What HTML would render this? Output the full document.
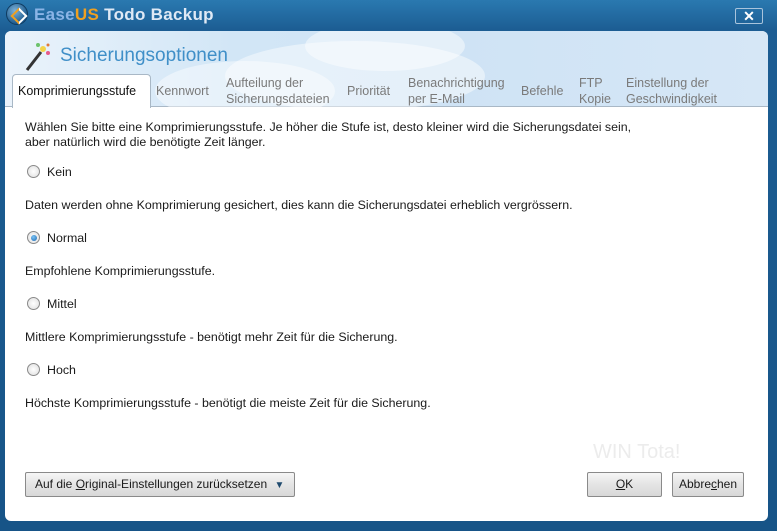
<!DOCTYPE html>
<html><head><meta charset="utf-8"><style>
*{margin:0;padding:0;box-sizing:border-box}
body{width:777px;height:531px;overflow:hidden;background:#1d5a8c;font-family:"Liberation Sans",sans-serif;font-size:12.4px;color:#1a1a1a;position:relative}
.frame{position:absolute;left:0;top:0;width:777px;height:531px;background:linear-gradient(#2a79b0,#1c5d93 30px,#175487);}
.title{position:absolute;left:34px;top:5px;font-family:"Liberation Sans",sans-serif;font-weight:bold;font-size:17px;color:#dfe9f5;letter-spacing:0.3px}
.title b{color:#f0a020}
.logo{position:absolute;left:6px;top:3px;width:22px;height:22px;border-radius:50%;background:radial-gradient(circle at 40% 35%,#7fb3d9,#1f5c8f 70%);border:1px solid #0f3b60}
.logo:after{content:"";position:absolute;left:6px;top:6px;width:8px;height:8px;border:2px solid #f0a020;border-right-color:#fff;border-bottom-color:#fff;transform:rotate(-45deg)}
.close{position:absolute;left:735px;top:8px;width:28px;height:16px;border:1px solid #a9c4dc;border-radius:2px;color:#fff;font-weight:bold;font-size:14px;text-align:center;line-height:14px}
.panel{position:absolute;left:5px;top:31px;width:763px;height:490px;background:#fff;border-radius:6px;overflow:hidden}
.head{position:absolute;left:0;top:0;width:100%;height:76px;background:linear-gradient(90deg,#eaf3fb 0%,#d2e6f6 30%,#cfe3f5 60%,#d6e7f6 100%);border-bottom:1px solid #a9b8c6}
.cloud{position:absolute;border-radius:50%;background:rgba(255,255,255,.45)}
.h1{position:absolute;left:55px;top:14px;font-size:19px;color:#3f8fc8}
.tab{position:absolute;top:44px;color:#7a7a7a;line-height:16px;font-size:12.5px;white-space:nowrap}
.tab.act{left:7px;top:43px;width:139px;height:34px;background:#fff;border:1px solid #a9b8c6;border-bottom:none;border-radius:4px 4px 0 0;color:#111;padding:8px 0 0 5px}
.p{position:absolute;left:20px;line-height:15px;white-space:nowrap}
.r{position:absolute;left:22px;width:13px;height:13px;border-radius:50%;border:1px solid #8a8a8a;background:radial-gradient(circle,#fff,#ddd)}
.r.on:after{content:"";position:absolute;left:2.5px;top:2.5px;width:6px;height:6px;border-radius:50%;background:radial-gradient(circle at 40% 35%,#7cc4f5,#1a66b0)}
.rl{position:absolute;left:42px}
.btn{position:absolute;height:25px;border:1px solid #8a8a8a;border-radius:2px;background:linear-gradient(#f6f6f6,#e4e4e4 50%,#d8d8d8);text-align:center;line-height:23px;font-size:12px;white-space:nowrap}
</style></head><body>
<div class="frame"></div>
<div class="logo"></div>
<div class="title"><span style="color:#8ab4e6">Ease<b>US</b></span> Todo Backup</div>
<div class="close">✕</div>
<div class="panel">
 <div class="head">
  <div class="cloud" style="left:220px;top:10px;width:260px;height:70px"></div>
  <div class="cloud" style="left:300px;top:-10px;width:160px;height:50px"></div>
  <div class="cloud" style="left:150px;top:30px;width:180px;height:60px"></div>
  <svg style="position:absolute;left:18px;top:9px" width="30" height="34"><line x1="4" y1="30" x2="18" y2="12" stroke="#333" stroke-width="3"/><circle cx="20" cy="9" r="3" fill="#f3d34a"/><circle cx="25" cy="13" r="2" fill="#e65a8a"/><circle cx="15" cy="5" r="2" fill="#6cc36c"/><circle cx="25" cy="5" r="1.5" fill="#e07a3a"/></svg>
  <div class="h1">Sicherungsoptionen</div>
  <div class="tab act">Komprimierungsstufe</div>
  <div class="tab" style="left:151px;top:52px">Kennwort</div>
  <div class="tab" style="left:221px">Aufteilung der<br>Sicherungsdateien</div>
  <div class="tab" style="left:342px;top:52px">Priorität</div>
  <div class="tab" style="left:403px">Benachrichtigung<br>per E-Mail</div>
  <div class="tab" style="left:516px;top:52px">Befehle</div>
  <div class="tab" style="left:574px">FTP<br>Kopie</div>
  <div class="tab" style="left:621px">Einstellung der<br>Geschwindigkeit</div>
 </div>
 <div class="p" style="top:89px">Wählen Sie bitte eine Komprimierungsstufe. Je höher die Stufe ist, desto kleiner wird die Sicherungsdatei sein,<br>aber natürlich wird die benötigte Zeit länger.</div>
 <div class="r" style="top:134px"></div><div class="rl" style="top:134px">Kein</div>
 <div class="p" style="top:167px">Daten werden ohne Komprimierung gesichert, dies kann die Sicherungsdatei erheblich vergrössern.</div>
 <div class="r on" style="top:200px"></div><div class="rl" style="top:200px">Normal</div>
 <div class="p" style="top:233px">Empfohlene Komprimierungsstufe.</div>
 <div class="r" style="top:266px"></div><div class="rl" style="top:266px">Mittel</div>
 <div class="p" style="top:299px">Mittlere Komprimierungsstufe - benötigt mehr Zeit für die Sicherung.</div>
 <div class="r" style="top:332px"></div><div class="rl" style="top:332px">Hoch</div>
 <div class="p" style="top:365px">Höchste Komprimierungsstufe - benötigt die meiste Zeit für die Sicherung.</div>
 <div style="position:absolute;left:588px;top:410px;color:#ececec;font-size:20px">WIN Tota!</div>
 <div class="btn" style="left:20px;top:441px;width:270px;text-align:left;padding-left:9px">Auf die <u>O</u>riginal-Einstellungen zurücksetzen <span style="color:#1f4a6e;font-size:10px;margin-left:4px">▼</span></div>
 <div class="btn" style="left:582px;top:441px;width:75px"><u>O</u>K</div>
 <div class="btn" style="left:667px;top:441px;width:72px">Abbre<u>c</u>hen</div>
</div>
</body></html>
